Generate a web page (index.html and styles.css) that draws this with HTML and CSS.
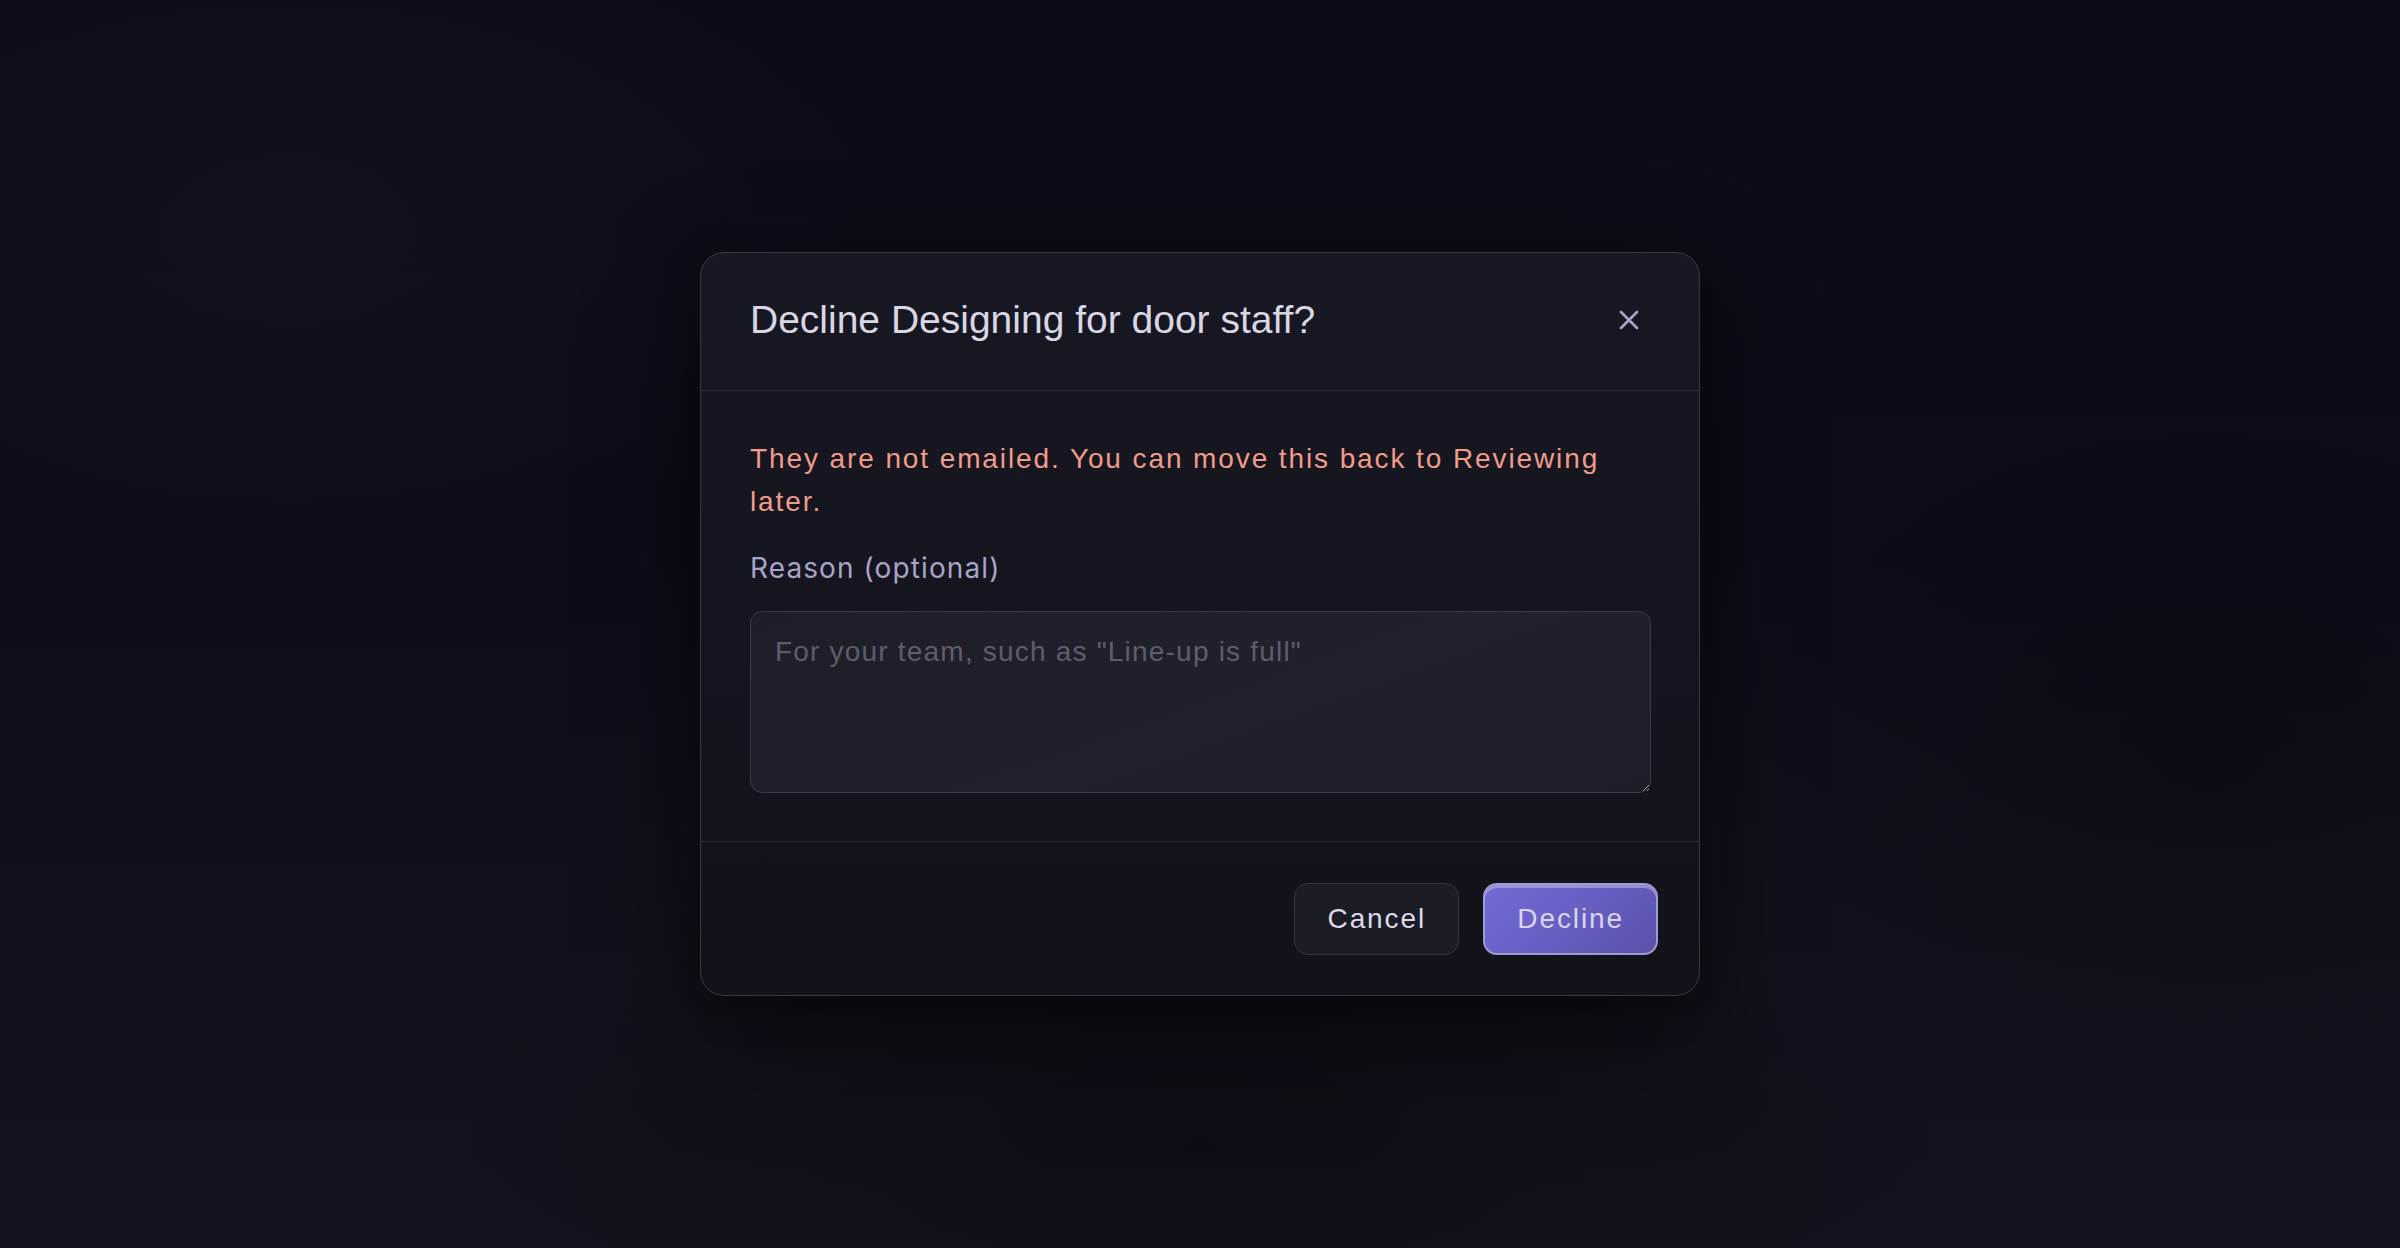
FILE: index.html
```html
<!DOCTYPE html>
<html lang="en">
<head>
<meta charset="utf-8">
<title>Decline application</title>
<link rel="stylesheet" href="styles.css">
</head>
<body>
<div class="backdrop">
  <div class="dialog" role="dialog" aria-labelledby="dialog-title">
    <header class="dialog-header">
      <h2 class="dialog-title" id="dialog-title">Decline Designing for door staff?</h2>
      <button class="close-btn" type="button" aria-label="Close">
        <svg width="20" height="20" viewBox="0 0 20 20" aria-hidden="true">
          <path d="M2 2 L18 18 M18 2 L2 18" stroke="currentColor" stroke-width="2.6" stroke-linecap="round" fill="none"/>
        </svg>
      </button>
    </header>
    <div class="dialog-body">
      <p class="notice">They are not emailed. You can move this back to Reviewing later.</p>
      <label class="field-label" for="reason">Reason (optional)</label>
      <textarea class="reason-input" id="reason" placeholder='For your team, such as "Line-up is full"'></textarea>
    </div>
    <footer class="dialog-footer">
      <button class="btn btn-secondary" type="button">Cancel</button>
      <button class="btn btn-primary" type="button">Decline</button>
    </footer>
  </div>
</div>
</body>
</html>
```
FILE: styles.css
```css
* {
  box-sizing: border-box;
}

html,
body {
  margin: 0;
  padding: 0;
}

body {
  font-family: "Liberation Sans", Arial, sans-serif;
  background: #0d0d17;
}

/* Page backdrop with soft dark shapes */
.backdrop {
  height: 1248px;
  display: flex;
  align-items: center;
  justify-content: center;
  background:
    radial-gradient(ellipse 900px 500px at 12% 18%, rgba(30, 30, 48, 0.3), transparent 70%),
    radial-gradient(ellipse 1100px 420px at 50% 92%, rgba(8, 8, 14, 0.5), transparent 70%),
    radial-gradient(ellipse 700px 500px at 92% 60%, rgba(8, 8, 14, 0.4), transparent 70%),
    linear-gradient(180deg, #0c0c16 0%, #0d0d18 45%, #12121c 80%, #14141e 100%);
}

.dialog {
  width: 1000px;
  border: 1.5px solid #383845;
  border-radius: 24px;
  background: linear-gradient(180deg, #181822 0%, #15151f 45%, #12121b 100%);
  box-shadow: 0 40px 120px rgba(0, 0, 0, 0.45), 0 10px 40px rgba(0, 0, 0, 0.3);
  overflow: hidden;
}

.dialog-header {
  display: flex;
  align-items: center;
  justify-content: space-between;
  padding: 45px 48px 48px 49px;
  border-bottom: 1.5px solid #2e2e3a;
}

.dialog-title {
  margin: 0;
  font-size: 39px;
  line-height: 44px;
  font-weight: 400;
  color: #d9d7e6;
}

.close-btn {
  width: 44px;
  height: 44px;
  display: flex;
  align-items: center;
  justify-content: center;
  padding: 0;
  border: 0;
  background: transparent;
  color: #a9a5c8;
  cursor: pointer;
}

.dialog-body {
  display: flex;
  flex-direction: column;
  padding: 46px 48px 48px 49px;
  border-bottom: 1.5px solid #2c2c37;
}

.notice {
  margin: 0;
  font-size: 28px;
  line-height: 43px;
  letter-spacing: 1.9px;
  color: #f19b89;
}

.field-label {
  margin-top: 24px;
  font-family: Inter, "Liberation Sans", sans-serif;
  font-size: 28px;
  line-height: 42px;
  font-weight: 400;
  letter-spacing: 1.1px;
  color: #a8a4c6;
}

.reason-input {
  margin-top: 22px;
  width: 100%;
  height: 182px;
  padding: 19px 24px;
  border: 1.5px solid #3a3a48;
  border-radius: 12px;
  background: linear-gradient(160deg, #1e1e29 0%, #21212c 55%, #1e1e28 100%);
  color: #d9d7e6;
  font-family: "Liberation Sans", Arial, sans-serif;
  font-size: 28px;
  line-height: 42px;
  letter-spacing: 1.2px;
  color-scheme: dark;
  resize: vertical;
  outline: none;
}

.reason-input::placeholder {
  color: #5f5d6c;
}

.dialog-footer {
  display: flex;
  justify-content: flex-end;
  gap: 24px;
  padding: 41px 41px 40px 41px;
}

.btn {
  height: 72px;
  padding: 0 32px;
  border-radius: 14px;
  font-family: "Liberation Sans", Arial, sans-serif;
  font-size: 28px;
  letter-spacing: 1.9px;
  cursor: pointer;
}

.btn-secondary {
  min-width: 165px;
  border: 1.5px solid #34343f;
  background: #1c1c25;
  color: #dcdaea;
}

.btn-primary {
  min-width: 174px;
  border: 2px solid #9f9bd2;
  background: linear-gradient(135deg, #736bd6 0%, #6860c4 45%, #5b52aa 100%);
  box-shadow: inset 0 3px 0 rgba(190, 186, 230, 0.55);
  color: #d9d5ef;
}
```
